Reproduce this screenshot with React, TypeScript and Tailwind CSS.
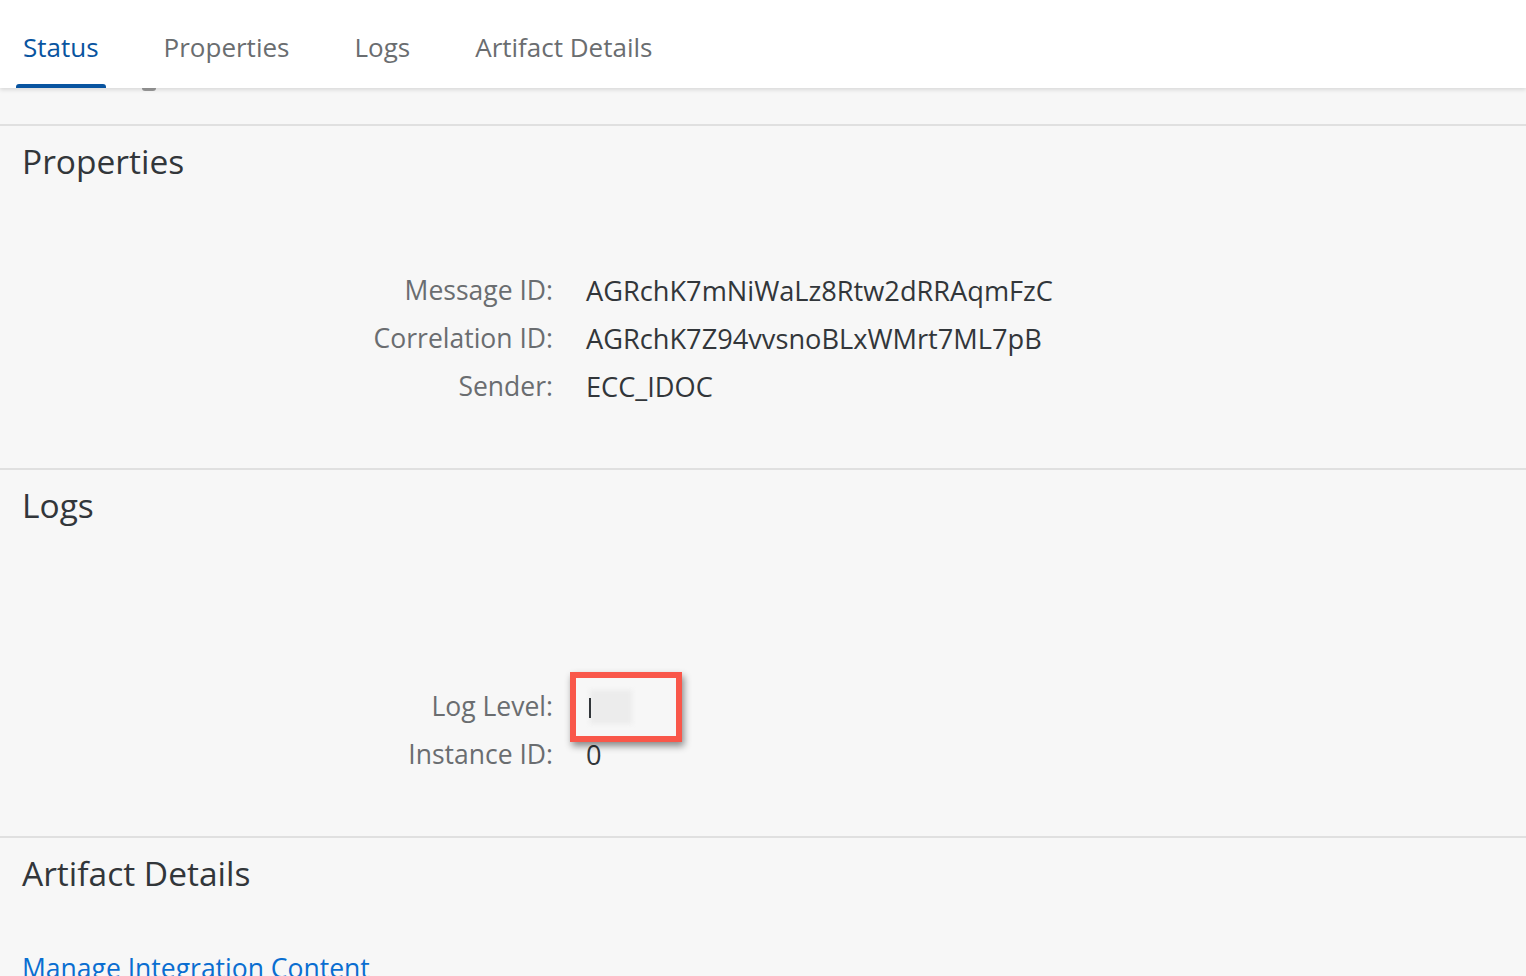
import React from 'react';

// Ligne label / valeur du formulaire
interface Field {
  label: string;
  value: React.ReactNode;
}

const font = { fontFamily: '"Open Sans", "Liberation Sans", sans-serif' };

function FormRows({ fields }: { fields: Field[] }) {
  return (
    <div className="grid grid-cols-[553px_1fr] gap-x-[33px]">
      {fields.map((f) => (
        <React.Fragment key={f.label}>
          <div className="h-[48px] flex items-center justify-end text-[26.5px] text-[#6a6d70]">{f.label}</div>
          <div className="h-[48px] flex items-center text-[27.2px] text-[#32363a]">{f.value}</div>
        </React.Fragment>
      ))}
    </div>
  );
}

function Section({ title, gap, children }: { title: string; gap: number; children: React.ReactNode }) {
  return (
    <section className="border-t-2 border-[#e0e0e0] pt-[15px] pb-[57px]">
      <h2 className="pl-[22px] h-[40px] flex items-center text-[33.5px] text-[#32363a]">{title}</h2>
      <div style={{ height: gap }} />
      {children}
    </section>
  );
}

export default function App() {
  const tabs = ['Status', 'Properties', 'Logs', 'Artifact Details'];

  return (
    <div className="w-[1526px] h-[976px] overflow-hidden bg-[#f7f7f7]" style={font}>
      {/* Header avec onglets */}
      <header className="relative z-10 h-[88px] bg-white shadow-[0_2px_4px_rgba(0,0,0,0.12)] flex items-stretch pl-[16px] gap-[51px]">
        {tabs.map((t, i) => (
          <div key={t} className="relative flex items-center px-[7px] pt-[6px]">
            <span className={'text-[26px] ' + (i === 0 ? 'text-[#0854a0]' : 'text-[#6a6d70]')}>{t}</span>
            {i === 0 && <div className="absolute left-0 right-0 bottom-0 h-[4px] rounded-t-[3px] bg-[#0854a0]" />}
          </div>
        ))}
      </header>

      <div className="relative h-[36px]">
        <div className="absolute left-[142px] top-0 w-[14px] h-[3px] rounded-b-full bg-[#9a9a9a]" />
      </div>

      <Section title="Properties" gap={86}>
        <FormRows
          fields={[
            { label: 'Message ID:', value: 'AGRchK7mNiWaLz8Rtw2dRRAqmFzC' },
            { label: 'Correlation ID:', value: 'AGRchK7Z94vvsnoBLxWMrt7ML7pB' },
            { label: 'Sender:', value: 'ECC_IDOC' },
          ]}
        />
      </Section>

      <Section title="Logs" gap={158}>
        <FormRows
          fields={[
            {
              label: 'Log Level:',
              value: (
                <div className="relative h-full w-[80px]">
                  <div className="absolute left-[-16px] top-[-11px] w-[112px] h-[70px] border-[6px] border-[#f9574a] shadow-[2px_4px_7px_rgba(0,0,0,0.45)]" />
                  <div className="absolute left-[4px] top-[7px] w-[42px] h-[34px] bg-[#ececec] blur-[2px]" />
                  <div className="absolute left-[3px] top-[15px] w-[2px] h-[20px] bg-[#32363a]" />
                </div>
              ),
            },
            { label: 'Instance ID:', value: '0' },
          ]}
        />
      </Section>

      <Section title="Artifact Details" gap={52}>
        <a className="pl-[22px] h-[48px] flex items-center text-[26.5px] text-[#0a6ed1]">Manage Integration Content</a>
      </Section>
    </div>
  );
}
